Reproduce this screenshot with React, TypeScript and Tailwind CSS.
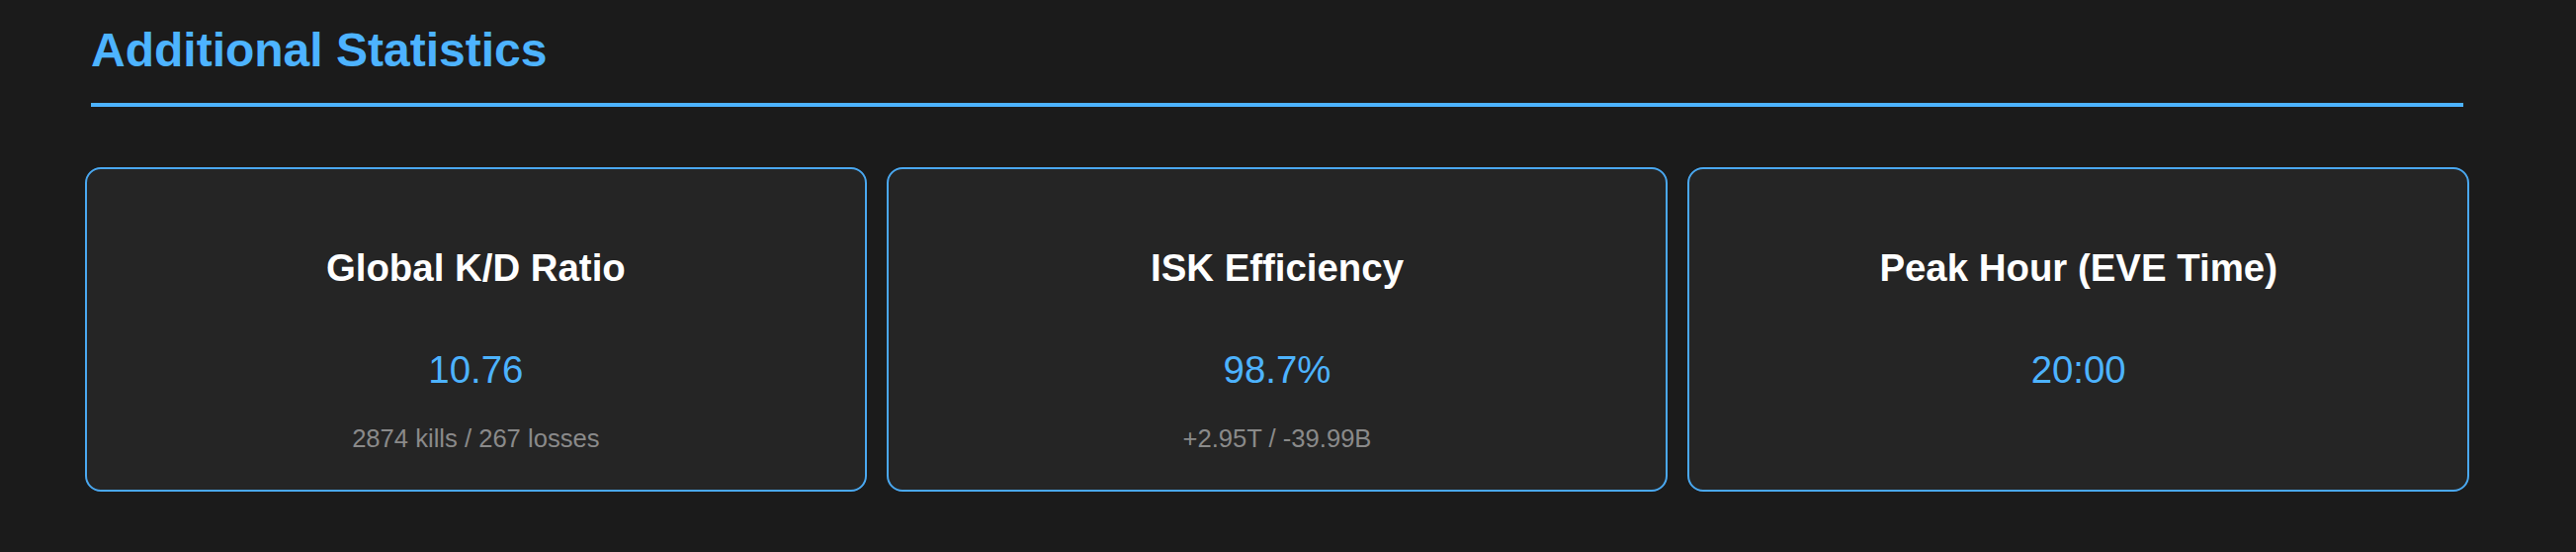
import React from "react";

const cards = [
  { title: "Global K/D Ratio", value: "10.76", sub: "2874 kills / 267 losses" },
  { title: "ISK Efficiency", value: "98.7%", sub: "+2.95T / -39.99B" },
  { title: "Peak Hour (EVE Time)", value: "20:00", sub: "" },
];

export default function App() {
  return (
    <div
      className="w-full h-[558px] bg-[#1b1b1b] overflow-hidden"
      style={{ fontFamily: '"Liberation Sans", Arial, Helvetica, sans-serif' }}
    >
      <div className="pl-[92px] pt-[23px]">
        <h2 className="w-[2400px] text-[48px] leading-[55px] font-bold text-[#4db3ff] pb-[26px] border-b-4 border-[#4db3ff]">
          Additional Statistics
        </h2>
      </div>
      <div className="ml-[86px] mt-[61px] w-[2412px] grid grid-cols-3 gap-[20px]">
        {cards.map((c) => (
          <div
            key={c.title}
            className="h-[328px] rounded-[16px] border-2 border-[#4aa8f0] bg-[#252525] flex flex-col items-center pt-[78px]"
          >
            <div className="text-[38.4px] leading-[44px] font-bold text-white">
              {c.title}
            </div>
            <div className="mt-[59px] text-[38.4px] leading-[44px] text-[#4db3ff]">
              {c.value}
            </div>
            {c.sub && (
              <div className="mt-[33px] text-[25.6px] leading-[29px] text-[#8a8a8a]">
                {c.sub}
              </div>
            )}
          </div>
        ))}
      </div>
    </div>
  );
}
